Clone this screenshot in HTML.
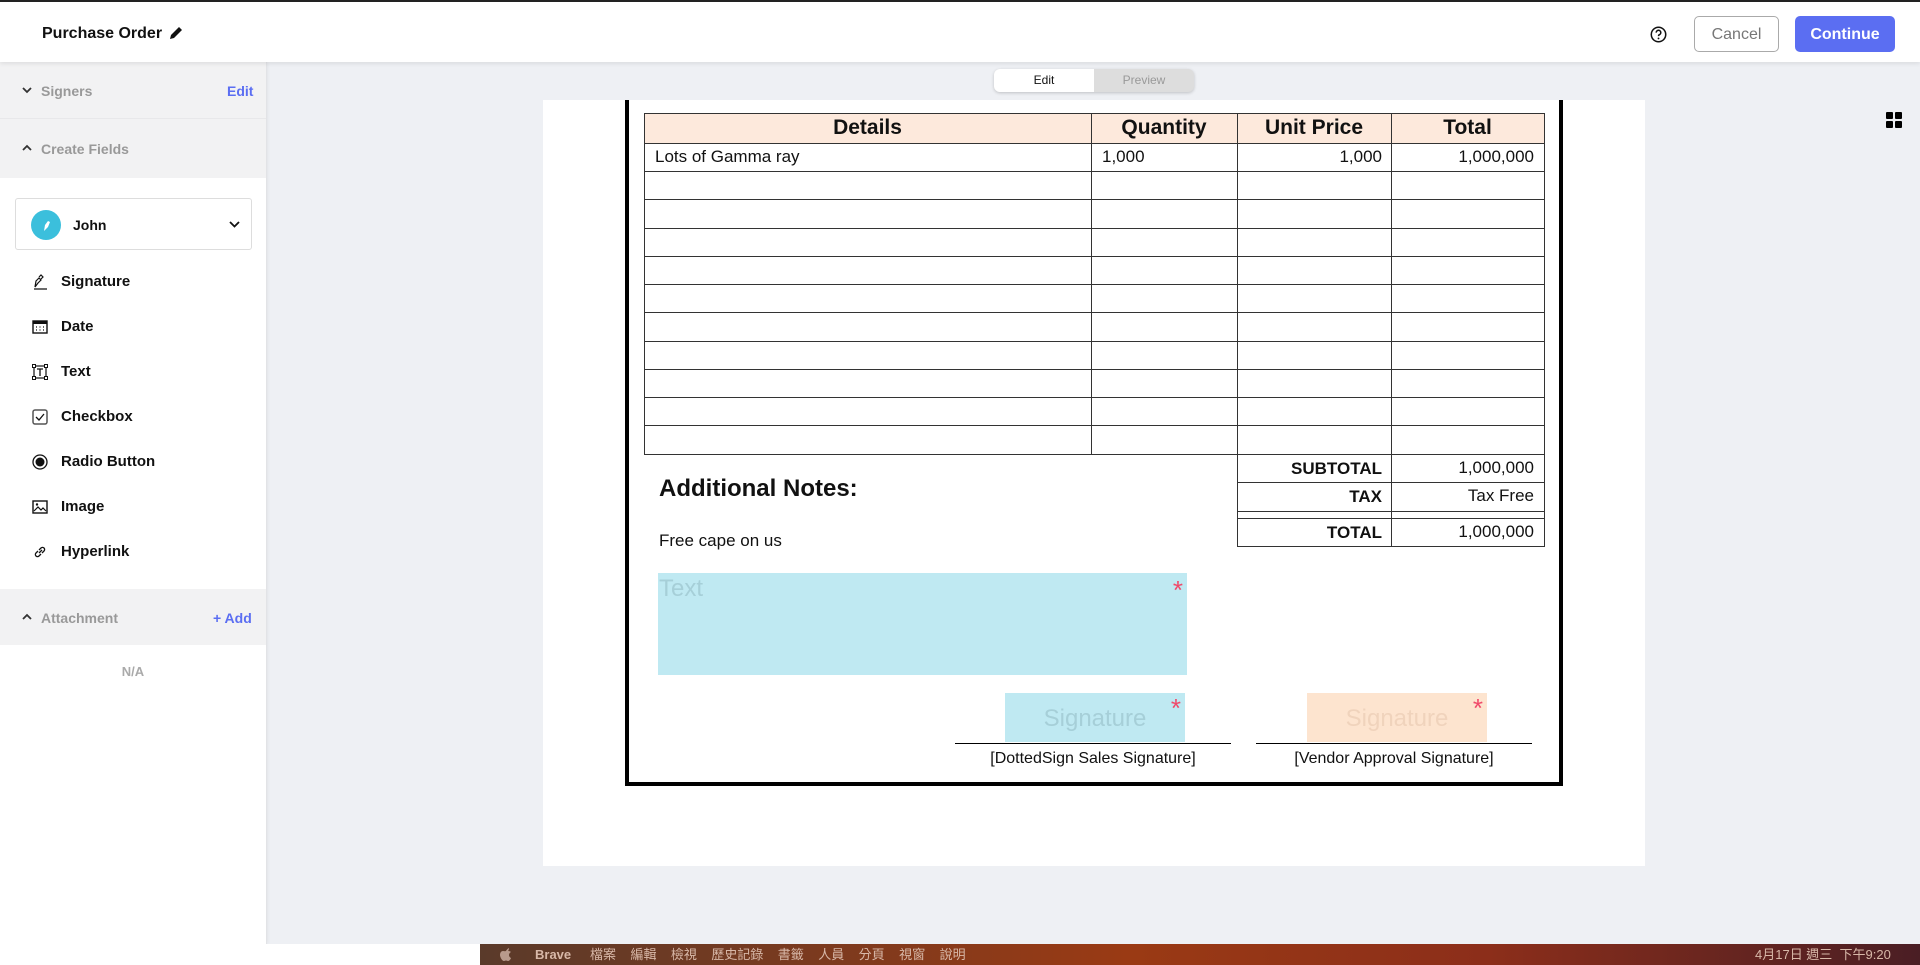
<!DOCTYPE html>
<html><head><meta charset="utf-8"><style>
*{box-sizing:border-box;margin:0;padding:0}
body{width:1920px;height:965px;overflow:hidden;background:#eef0f4;font-family:"Liberation Sans","Noto Sans CJK TC",sans-serif;position:relative;color:#111}
.abs{position:absolute}
.hdr{left:0;top:0;width:1920px;height:62px;background:#fff;border-top:2px solid #222;box-shadow:0 2px 4px rgba(0,0,0,.08);z-index:2}
.side{left:0;top:62px;width:267px;height:882px;background:#fff;border-right:1px solid #e2e3e6;box-shadow:1px 0 3px rgba(0,0,0,.05)}
.sec{position:absolute;left:0;width:266px;background:#f2f2f3;font-size:14px;color:#999;font-weight:bold}
.item{position:absolute;left:61px;font-size:15px;font-weight:bold;color:#111}
.ic{position:absolute;left:31px}
.cell{position:absolute;font-size:17px;font-family:"Liberation Sans",sans-serif}
.hl{position:absolute;height:1px;background:#333}
.vl{position:absolute;width:1px;background:#333}
.th{position:absolute;top:115px;font-size:21px;font-weight:bold;text-align:center}
</style></head><body>
<div class="abs hdr">
 <div class="abs" style="left:42px;top:23px;font-size:16px;font-weight:bold">Purchase Order</div>
 <svg class="abs" style="left:168px;top:23px" width="16" height="16" viewBox="0 0 16 16"><path d="M2 14l1-4 8-8 3 3-8 8z" fill="#111"/></svg>
 <svg class="abs" style="left:1650px;top:24px" width="17" height="17" viewBox="0 0 20 20"><circle cx="10" cy="10" r="8.5" fill="none" stroke="#111" stroke-width="1.8"/><path d="M7.3 7.8a2.7 2.7 0 1 1 3.6 2.5c-.7.3-.9.8-.9 1.6" fill="none" stroke="#111" stroke-width="1.8"/><circle cx="10" cy="14.6" r="1.1" fill="#111"/></svg>
 <div class="abs" style="left:1694px;top:14px;width:85px;height:36px;border:1px solid #aaa;border-radius:5px;color:#777;font-size:16px;text-align:center;line-height:36px">Cancel</div>
 <div class="abs" style="left:1795px;top:14px;width:100px;height:36px;background:#5b6ef2;border-radius:5px;color:#fff;font-size:16px;font-weight:bold;text-align:center;line-height:37px">Continue</div>
</div>
<div class="abs side">
 <div class="sec" style="top:0;height:57px;border-bottom:1px solid #e8e8ea"><svg class="abs" style="left:22px;top:25px" width="10" height="7" viewBox="0 0 10 7"><path d="M1 1l4 4 4-4" fill="none" stroke="#333" stroke-width="1.8"/></svg><span class="abs" style="left:41px;top:21px">Signers</span><span class="abs" style="left:227px;top:21px;color:#5b6ef2">Edit</span></div>
 <div class="sec" style="top:57px;height:59px"><svg class="abs" style="left:22px;top:25px" width="10" height="7" viewBox="0 0 10 7"><path d="M1 6l4-4 4 4" fill="none" stroke="#333" stroke-width="1.8"/></svg><span class="abs" style="left:41px;top:22px">Create Fields</span></div>
 <div class="abs" style="left:15px;top:136px;width:237px;height:52px;border:1px solid #ddd;border-radius:3px">
  <div class="abs" style="left:15px;top:11px;width:30px;height:30px;border-radius:50%;background:#3bbfdc"></div>
  <svg class="abs" style="left:24px;top:19px" width="12" height="14" viewBox="0 0 12 14"><path d="M4 13l1-6 3-4 2 1-2 5z" fill="#fff"/></svg>
  <div class="abs" style="left:57px;top:18px;font-size:14px;font-weight:bold">John</div>
  <svg class="abs" style="left:213px;top:22px" width="11" height="8" viewBox="0 0 11 8"><path d="M1 1l4.5 4.5L10 1" fill="none" stroke="#111" stroke-width="1.8"/></svg>
 </div>
 <svg class="ic" style="top:211px" width="18" height="18" viewBox="0 0 18 18"><path d="M4 14l1-6 3-3 2 2-3 3zM8 4l2-2 2 2-2 2M3 16h13" fill="none" stroke="#111" stroke-width="1.2"/></svg><div class="item" style="top:211px">Signature</div>
 <svg class="ic" style="top:256px" width="18" height="18" viewBox="0 0 18 18"><rect x="2" y="3" width="14" height="12" fill="none" stroke="#111" stroke-width="1.4"/><rect x="2" y="3" width="14" height="3" fill="#111"/><path d="M5 9h1M8.5 9h1M12 9h1M5 12h1M8.5 12h1M12 12h1" stroke="#111" stroke-width="1.2"/></svg><div class="item" style="top:256px">Date</div>
 <svg class="ic" style="top:301px" width="18" height="18" viewBox="0 0 18 18"><rect x="3" y="3" width="12" height="12" fill="none" stroke="#111" stroke-width="1.2"/><path d="M6 6h6M9 6v7" stroke="#111" stroke-width="1.3"/><rect x="1.5" y="1.5" width="3" height="3" fill="#fff" stroke="#111"/><rect x="13.5" y="1.5" width="3" height="3" fill="#fff" stroke="#111"/><rect x="1.5" y="13.5" width="3" height="3" fill="#fff" stroke="#111"/><rect x="13.5" y="13.5" width="3" height="3" fill="#fff" stroke="#111"/></svg><div class="item" style="top:301px">Text</div>
 <svg class="ic" style="top:346px" width="18" height="18" viewBox="0 0 18 18"><rect x="2" y="2" width="14" height="14" rx="2" fill="none" stroke="#555" stroke-width="1.5"/><path d="M5 9l3 3 5-6" fill="none" stroke="#111" stroke-width="1.3"/></svg><div class="item" style="top:346px">Checkbox</div>
 <svg class="ic" style="top:391px" width="18" height="18" viewBox="0 0 18 18"><circle cx="9" cy="9" r="7" fill="none" stroke="#111" stroke-width="1.3"/><circle cx="9" cy="9" r="4.5" fill="#111"/></svg><div class="item" style="top:391px">Radio Button</div>
 <svg class="ic" style="top:436px" width="18" height="18" viewBox="0 0 18 18"><rect x="2" y="3" width="14" height="12" fill="none" stroke="#111" stroke-width="1.4"/><path d="M3 13l4-4 3 3 2-2 3 3" fill="none" stroke="#111" stroke-width="1.2"/><circle cx="6" cy="6.5" r="1.2" fill="#111"/></svg><div class="item" style="top:436px">Image</div>
 <svg class="ic" style="top:481px" width="18" height="18" viewBox="0 0 18 18"><path d="M8 10l3-3M7 8l-2 2a2 2 0 0 0 3 3l2-2M11 10l2-2a2 2 0 0 0-3-3L8 7" fill="none" stroke="#111" stroke-width="1.3"/></svg><div class="item" style="top:481px">Hyperlink</div>
 <div class="sec" style="top:527px;height:56px"><svg class="abs" style="left:22px;top:24px" width="10" height="7" viewBox="0 0 10 7"><path d="M1 6l4-4 4 4" fill="none" stroke="#333" stroke-width="1.8"/></svg><span class="abs" style="left:41px;top:21px">Attachment</span><span class="abs" style="left:213px;top:21px;color:#5b6ef2">+ Add</span></div>
 <div class="abs" style="left:0;width:266px;top:602px;text-align:center;font-size:13px;font-weight:bold;color:#aaa">N/A</div>
</div>
<div class="abs" style="left:994px;top:69px;width:200px;height:23px;background:#ddd;border-radius:6px;box-shadow:0 1px 3px rgba(0,0,0,.2);font-size:12px">
 <div class="abs" style="left:0;top:0;width:100px;height:23px;background:#fff;border-radius:6px 0 0 6px;text-align:center;line-height:23px">Edit</div>
 <div class="abs" style="left:100px;top:0;width:100px;height:23px;text-align:center;line-height:23px;color:#999">Preview</div>
</div>
<svg class="abs" style="left:1886px;top:112px" width="16" height="16"><rect x="0" y="0" width="7" height="7" rx="1"/><rect x="9" y="0" width="7" height="7" rx="1"/><rect x="0" y="9" width="7" height="7" rx="1"/><rect x="9" y="9" width="7" height="7" rx="1"/></svg>
<div class="abs" style="left:543px;top:100px;width:1102px;height:766px;background:#fff"></div>
<div class="abs" style="left:625px;top:100px;width:938px;height:686px;border:4px solid #000;border-top:none"></div>
<div class="abs" style="left:644px;top:113px;width:900px;height:30px;background:#fde9dc"></div>
<div class="hl" style="left:644px;top:113px;width:901px"></div>
<div class="hl" style="left:644px;top:143px;width:901px"></div>
<div class="hl" style="left:644px;top:171px;width:901px"></div>
<div class="hl" style="left:644px;top:199px;width:901px"></div>
<div class="hl" style="left:644px;top:228px;width:901px"></div>
<div class="hl" style="left:644px;top:256px;width:901px"></div>
<div class="hl" style="left:644px;top:284px;width:901px"></div>
<div class="hl" style="left:644px;top:312px;width:901px"></div>
<div class="hl" style="left:644px;top:341px;width:901px"></div>
<div class="hl" style="left:644px;top:369px;width:901px"></div>
<div class="hl" style="left:644px;top:397px;width:901px"></div>
<div class="hl" style="left:644px;top:425px;width:901px"></div>
<div class="hl" style="left:644px;top:454px;width:901px"></div>
<div class="vl" style="left:644px;top:113px;height:341px"></div>
<div class="vl" style="left:1091px;top:113px;height:341px"></div>
<div class="vl" style="left:1237px;top:113px;height:433px"></div>
<div class="vl" style="left:1391px;top:113px;height:433px"></div>
<div class="vl" style="left:1544px;top:113px;height:433px"></div>
<div class="hl" style="left:1237px;top:482px;width:308px"></div>
<div class="hl" style="left:1237px;top:511px;width:308px"></div>
<div class="hl" style="left:1237px;top:518px;width:308px"></div>
<div class="hl" style="left:1237px;top:546px;width:308px"></div>
<div class="th" style="left:644px;width:447px;top:116px">Details</div>
<div class="th" style="left:1091px;width:146px;top:116px">Quantity</div>
<div class="th" style="left:1237px;width:154px;top:116px">Unit Price</div>
<div class="th" style="left:1391px;width:153px;top:116px">Total</div>
<div class="cell" style="left:655px;top:147px">Lots of Gamma ray</div>
<div class="cell" style="left:1102px;top:147px">1,000</div>
<div class="cell" style="left:1237px;width:145px;text-align:right;top:147px">1,000</div>
<div class="cell" style="left:1391px;width:143px;text-align:right;top:147px">1,000,000</div>
<div class="cell" style="left:1237px;width:145px;text-align:right;top:459px;font-weight:bold">SUBTOTAL</div>
<div class="cell" style="left:1391px;width:143px;text-align:right;top:458px">1,000,000</div>
<div class="cell" style="left:1237px;width:145px;text-align:right;top:487px;font-weight:bold">TAX</div>
<div class="cell" style="left:1391px;width:143px;text-align:right;top:486px">Tax Free</div>
<div class="cell" style="left:1237px;width:145px;text-align:right;top:523px;font-weight:bold">TOTAL</div>
<div class="cell" style="left:1391px;width:143px;text-align:right;top:522px">1,000,000</div>
<div class="cell" style="left:659px;top:475px;font-size:24px;font-weight:bold">Additional Notes:</div>
<div class="cell" style="left:659px;top:531px">Free cape on us</div>
<div class="abs" style="left:658px;top:573px;width:529px;height:102px;background:#bfe9f2"><span class="abs" style="left:1px;top:2px;font-size:24px;color:#a6cfd8">Text</span><span class="abs" style="right:4px;top:2px;font-size:26px;color:#f04a6a">*</span></div>
<div class="abs" style="left:1005px;top:693px;width:180px;height:49px;background:#bfe9f2;text-align:center;line-height:51px;font-size:24px;color:#a6cfd8">Signature<span class="abs" style="right:4px;top:-10px;font-size:26px;color:#f04a6a">*</span></div>
<div class="abs" style="left:1307px;top:693px;width:180px;height:49px;background:#fde4cf;text-align:center;line-height:51px;font-size:24px;color:#f0d3bc">Signature<span class="abs" style="right:4px;top:-10px;font-size:26px;color:#f04a6a">*</span></div>
<div class="hl" style="left:955px;top:743px;width:276px;background:#000"></div>
<div class="hl" style="left:1256px;top:743px;width:276px;background:#000"></div>
<div class="cell" style="left:955px;width:276px;text-align:center;top:750px;font-size:16px">[DottedSign Sales Signature]</div>
<div class="cell" style="left:1256px;width:276px;text-align:center;top:750px;font-size:16px">[Vendor Approval Signature]</div>
<div class="abs" style="left:0;top:944px;width:480px;height:21px;background:#fff"></div>
<div class="abs" style="left:480px;top:944px;width:1440px;height:21px;background:linear-gradient(90deg,#5a3a2a,#9a3a14 45%,#8c2e1a 70%,#4a1e24);color:#d8b8a8;font-size:13px;line-height:21px">
 <svg class="abs" style="left:20px;top:3px" width="12" height="15" viewBox="0 0 12 15"><path d="M6 4c1-2 3-3 3-3s0 2-1 3c2 0 3 1 3 1s-2 1-2 3 2 3 2 3-1 3-3 3c-1 0-1-.5-2-.5s-1 .5-2 .5C2 14 0 10 0 8s1-4 3-4c1 0 2 .5 3 0z" fill="#b89a8c"/></svg>
 <span class="abs" style="left:55px;font-weight:bold">Brave</span>
 <span class="abs" style="left:110px">檔案&nbsp;&nbsp;&nbsp;&nbsp;編輯&nbsp;&nbsp;&nbsp;&nbsp;檢視&nbsp;&nbsp;&nbsp;&nbsp;歷史記錄&nbsp;&nbsp;&nbsp;&nbsp;書籤&nbsp;&nbsp;&nbsp;&nbsp;人員&nbsp;&nbsp;&nbsp;&nbsp;分頁&nbsp;&nbsp;&nbsp;&nbsp;視窗&nbsp;&nbsp;&nbsp;&nbsp;說明</span>
 <span class="abs" style="left:1275px">4月17日 週三&nbsp;&nbsp;下午9:20</span>
</div>
</body></html>
